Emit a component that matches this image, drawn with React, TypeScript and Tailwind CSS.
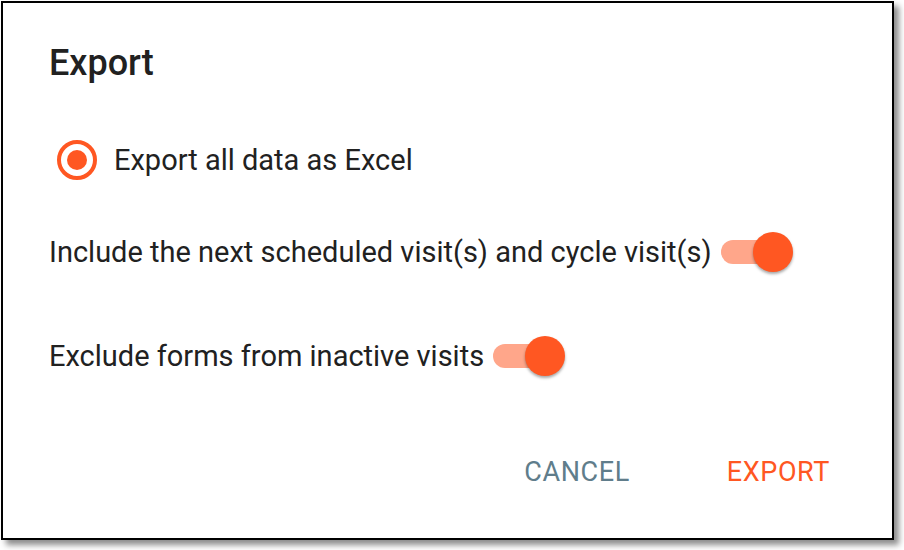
import React from "react";

function Toggle() {
  return (
    <div className="relative ml-[9px] h-[40px] w-[72px] flex items-center">
      <div className="h-[24px] w-[66px] rounded-full bg-[#FFA68A]" />
      <div className="absolute right-0 top-0 h-[40px] w-[40px] rounded-full bg-[#FF5722] shadow-[0_2px_3px_rgba(0,0,0,0.35)]" />
    </div>
  );
}

export default function App() {
  return (
    <div
      className="w-[904px] h-[550px] bg-white"
      style={{ fontFamily: "Roboto, 'Liberation Sans', sans-serif" }}
    >
      <div className="ml-px mt-px w-[893px] h-[539px] border-2 border-black bg-white shadow-[5px_5px_6px_rgba(0,0,0,0.45)] flex flex-col pl-[46px] pt-[39px]">
        <div className="text-[36px] leading-[42px] font-medium text-[#212121]">Export</div>
        <div className="mt-[56px] flex items-center h-[40px]">
          <div className="ml-[8px] h-[40px] w-[40px] rounded-full border-[4px] border-[#FF5722] flex items-center justify-center">
            <div className="h-[20px] w-[20px] rounded-full bg-[#FF5722]" />
          </div>
          <div className="ml-[17px] text-[29px] leading-[34px] text-[#212121]">Export all data as Excel</div>
        </div>
        <div className="mt-[52px] flex items-center h-[40px]">
          <div className="text-[29px] leading-[34px] text-[#212121]">Include the next scheduled visit(s) and cycle visit(s)</div>
          <Toggle />
        </div>
        <div className="mt-[64px] flex items-center h-[40px]">
          <div className="text-[29px] leading-[34px] text-[#212121]">Exclude forms from inactive visits</div>
          <Toggle />
        </div>
        <div className="mt-[76px] flex items-center justify-end h-[40px] pr-[62px]">
          <div className="text-[27px] leading-[40px] tracking-[0.6px] text-[#607D8B]">CANCEL</div>
          <div className="ml-[97px] text-[27px] leading-[40px] tracking-[0.6px] text-[#FF5722]">EXPORT</div>
        </div>
      </div>
    </div>
  );
}
